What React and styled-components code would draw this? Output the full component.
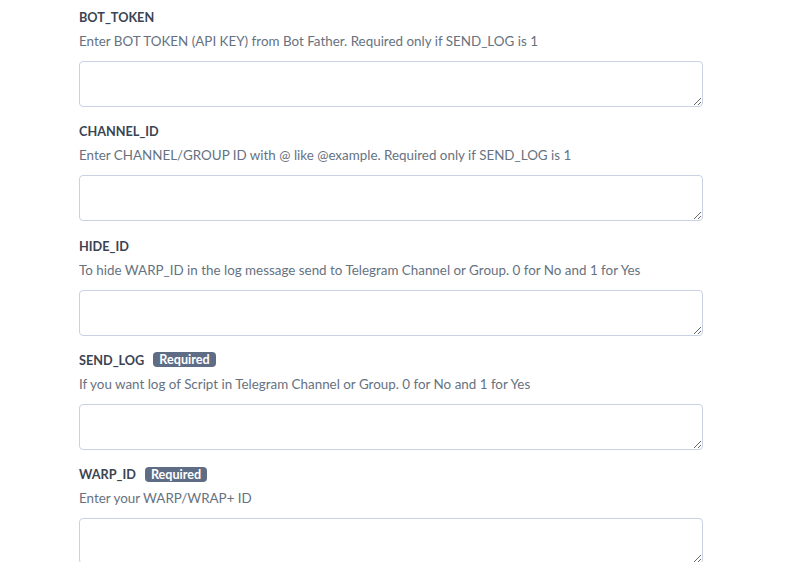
import React from 'react';
import styled, { createGlobalStyle } from 'styled-components';

const GlobalStyle = createGlobalStyle`
  body {
    margin: 0;
    background: #fff;
    font-family: Lato, "Open Sans", sans-serif;
  }
`;

const Form = styled.div`
  padding: 7px 0 0 79px;
  display: flex;
  flex-direction: column;
`;

const Field = styled.div`
  display: flex;
  flex-direction: column;
  margin-bottom: 14.25px;
`;

const LabelRow = styled.div`
  display: flex;
  align-items: center;
  gap: 9px;
  height: 20px;
  margin-bottom: 4px;
`;

const Label = styled.label`
  font-size: 12.7px;
  font-weight: 700;
  color: #3a4452;
`;

const Badge = styled.span`
  background: #5e6d85;
  color: #fff;
  font-size: 12.6px;
  font-weight: 700;
  line-height: 15px;
  padding: 0 6px;
  border-radius: 4px;
`;

const Hint = styled.p`
  margin: 0 0 10px;
  font-size: 13.4px;
  line-height: 20px;
  color: #66727f;
`;

const Input = styled.textarea`
  box-sizing: border-box;
  width: 624px;
  height: 46px;
  border: 1px solid #c8d2e2;
  border-radius: 4px;
  font-family: inherit;
  font-size: 13px;
  padding: 6px 10px;
  outline: none;
`;

const fields = [
  { name: 'BOT_TOKEN', hint: 'Enter BOT TOKEN (API KEY) from Bot Father. Required only if SEND_LOG is 1' },
  { name: 'CHANNEL_ID', hint: 'Enter CHANNEL/GROUP ID with @ like @example. Required only if SEND_LOG is 1' },
  { name: 'HIDE_ID', hint: 'To hide WARP_ID in the log message send to Telegram Channel or Group. 0 for No and 1 for Yes' },
  { name: 'SEND_LOG', hint: 'If you want log of Script in Telegram Channel or Group. 0 for No and 1 for Yes', required: true },
  { name: 'WARP_ID', hint: 'Enter your WARP/WRAP+ ID', required: true },
];

export default function App() {
  return (
    <>
      <GlobalStyle />
      <Form>
        {fields.map((f) => (
          <Field key={f.name}>
            <LabelRow>
              <Label>{f.name}</Label>
              {f.required && <Badge>Required</Badge>}
            </LabelRow>
            <Hint>{f.hint}</Hint>
            <Input />
          </Field>
        ))}
      </Form>
    </>
  );
}
